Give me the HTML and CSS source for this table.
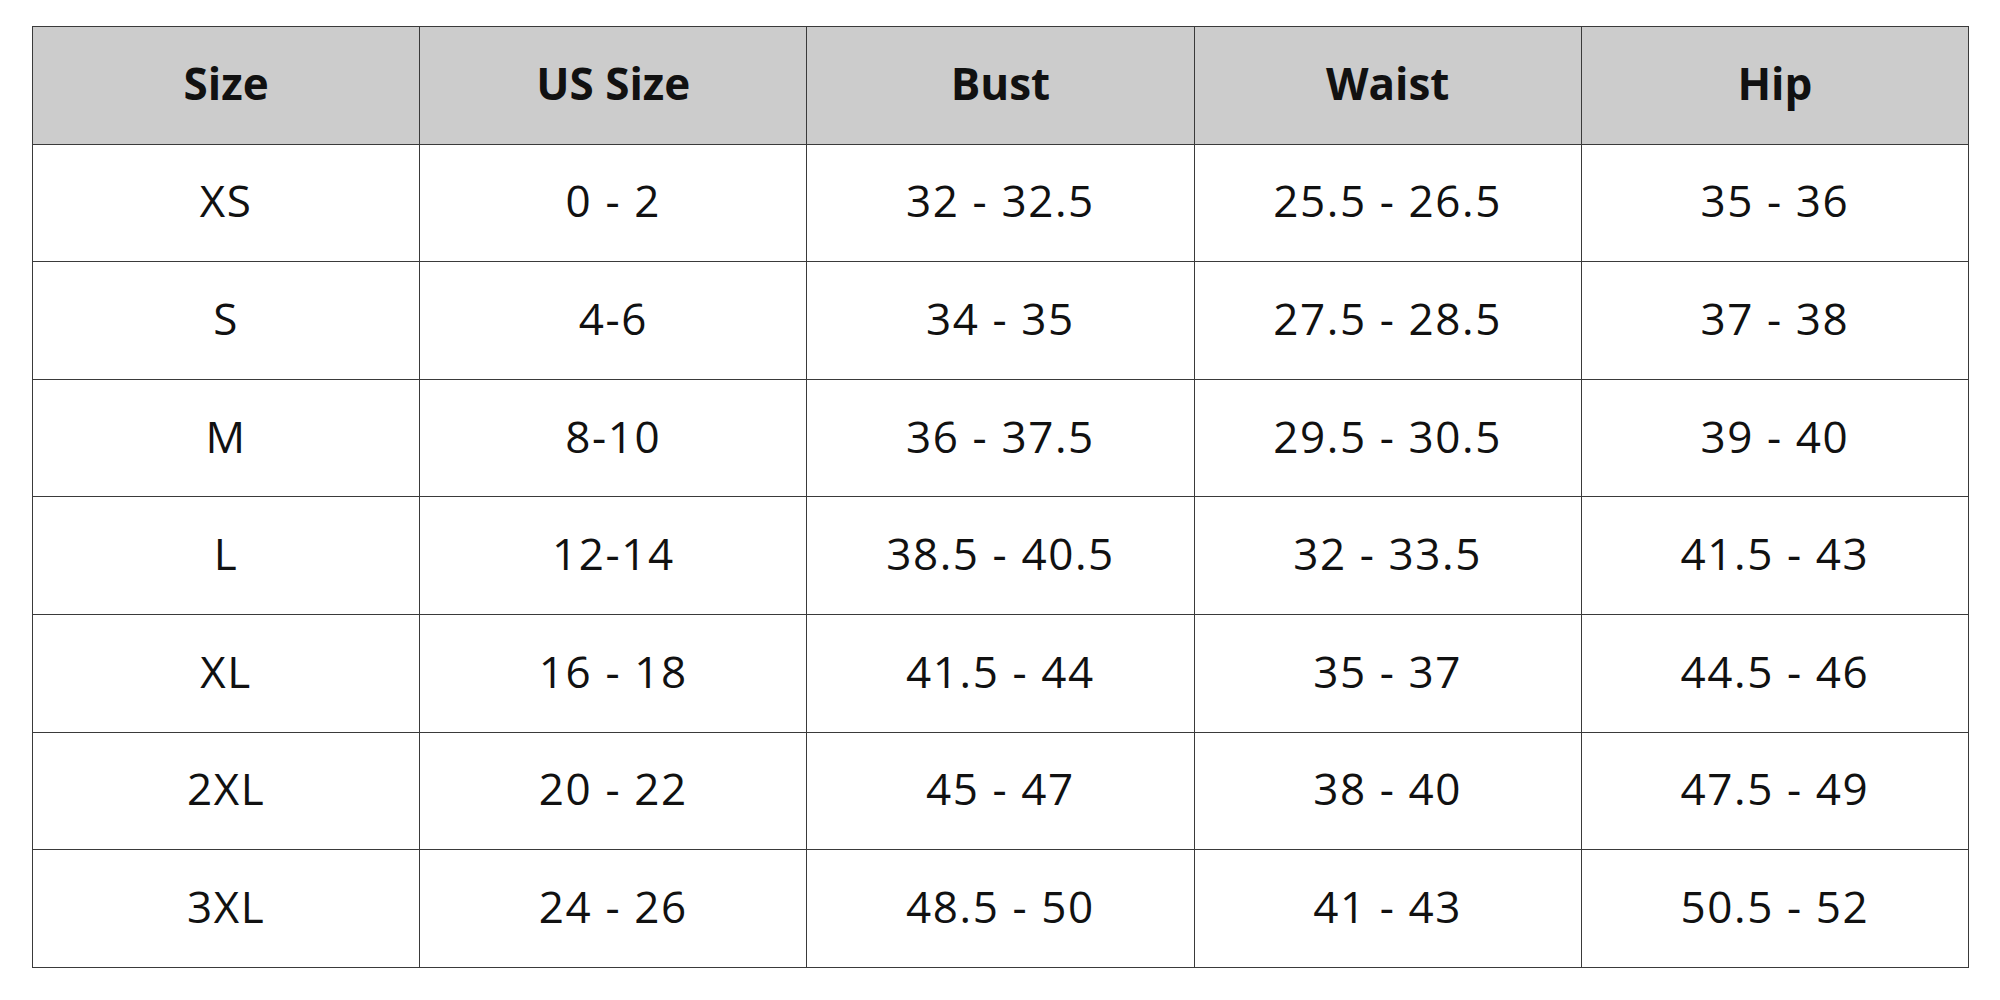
FILE: index.html
```html
<!DOCTYPE html>
<html>
<head>
<meta charset="utf-8">
<link rel="stylesheet" href="styles.css">
</head>
<body>
<table class="size-chart">
  <thead>
    <tr><th>Size</th><th>US Size</th><th>Bust</th><th>Waist</th><th>Hip</th></tr>
  </thead>
  <tbody>
    <tr><td>XS</td><td>0 - 2</td><td>32 - 32.5</td><td>25.5 - 26.5</td><td>35 - 36</td></tr>
    <tr><td>S</td><td>4-6</td><td>34 - 35</td><td>27.5 - 28.5</td><td>37 - 38</td></tr>
    <tr><td>M</td><td>8-10</td><td>36 - 37.5</td><td>29.5 - 30.5</td><td>39 - 40</td></tr>
    <tr><td>L</td><td>12-14</td><td>38.5 - 40.5</td><td>32 - 33.5</td><td>41.5 - 43</td></tr>
    <tr><td>XL</td><td>16 - 18</td><td>41.5 - 44</td><td>35 - 37</td><td>44.5 - 46</td></tr>
    <tr><td>2XL</td><td>20 - 22</td><td>45 - 47</td><td>38 - 40</td><td>47.5 - 49</td></tr>
    <tr><td>3XL</td><td>24 - 26</td><td>48.5 - 50</td><td>41 - 43</td><td>50.5 - 52</td></tr>
  </tbody>
</table>
</body>
</html>
```
FILE: styles.css
```css
html, body {
  margin: 0;
  background: #ffffff;
}
body {
  padding: 26px 32px;
  font-family: "Open Sans", "Liberation Sans", sans-serif;
  color: #111111;
}
.size-chart {
  width: 1937px;
  border-collapse: collapse;
  table-layout: fixed;
}
.size-chart tr {
  height: 117.6px;
}
.size-chart th,
.size-chart td {
  border: 1px solid #3a3a3a;
  text-align: center;
  vertical-align: middle;
  padding: 0 0 5px;
  font-size: 44px;
  line-height: 1;
}
.size-chart th {
  background: #cccccc;
  font-weight: 700;
}
.size-chart td {
  font-weight: 400;
  letter-spacing: 1.6px;
}
```
